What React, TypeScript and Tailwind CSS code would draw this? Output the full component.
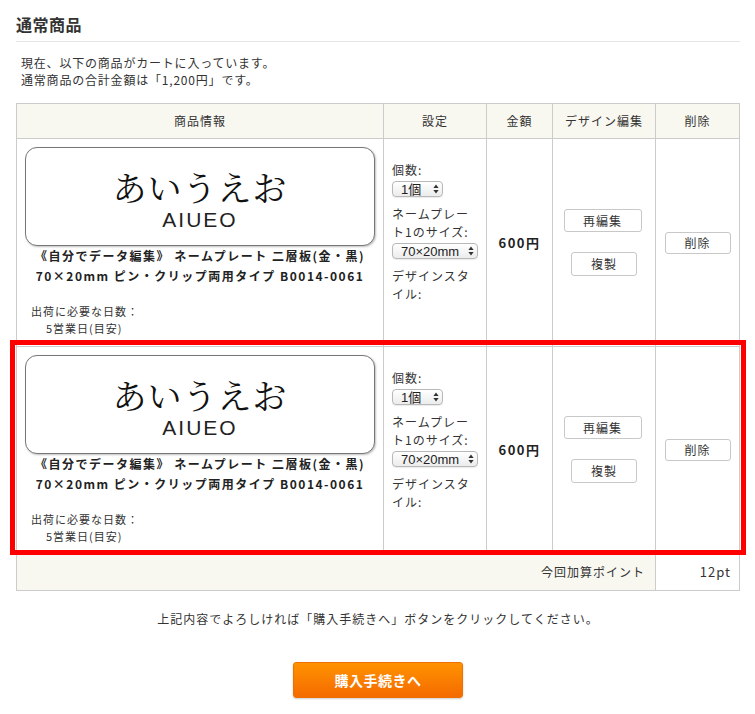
import React from "react";

const jp = "font-['Noto_Sans_CJK_JP',sans-serif]";

function Arrows() {
  return (
    <svg width="6" height="10" viewBox="0 0 6 10" className="shrink-0">
      <path d="M3 0.5 L5.6 4 L0.4 4 Z" fill="#333" />
      <path d="M3 9.5 L5.6 6 L0.4 6 Z" fill="#333" />
    </svg>
  );
}

function FakeSelect({ label, w }: { label: string; w: string }) {
  return (
    <div
      className={`${w} h-[16px] mt-[2px] flex items-center justify-between pl-[8px] pr-[3px] rounded-[4px] border border-[#b8b8b8] bg-gradient-to-b from-[#ffffff] to-[#ececec] shadow-[0_1px_1px_rgba(0,0,0,0.08)] text-[13px] leading-[14px] text-[#222] tracking-[0px] font-['Liberation_Sans','Noto_Sans_CJK_JP',sans-serif]`}
    >
      <span className="pt-[2px]">{label}</span>
      <Arrows />
    </div>
  );
}

function Btn({ children, cls }: { children: React.ReactNode; cls: string }) {
  return (
    <div
      className={`${cls} flex items-center justify-center bg-white border border-[#c8c8c8] rounded-[3px] text-[12px] text-[#333] tracking-[1px]`}
    >
      {children}
    </div>
  );
}

function ItemRow({ h, highlight }: { h: string; highlight?: boolean }) {
  return (
    <div className={`relative flex ${h} border-b border-[#cccccc]`}>
      {highlight && (
        <div className="pointer-events-none absolute -top-[7px] -left-[7px] -right-[7px] -bottom-[3px] border-[5px] border-[#ff0000] z-10" />
      )}
      {/* product info */}
      <div className="w-[367px] border-r border-[#cccccc] px-[8px] pt-[8px]">
        <div className="w-[350px] h-[99px] rounded-[12px] border border-[#777] shadow-[1px_1px_2px_rgba(0,0,0,0.25)] bg-white flex flex-col items-center pt-[22px]">
          <div className="text-[34px] leading-[34px] text-[#111] tracking-[1px] font-['Noto_Serif_CJK_JP','Noto_Sans_CJK_JP',serif] font-normal">
            あいうえお
          </div>
          <div className="mt-[5px] text-[21px] leading-[22px] text-[#222] tracking-[2px] font-['Liberation_Sans',sans-serif]">
            AIUEO
          </div>
        </div>
        <div className="mt-[0px] text-center text-[12px] leading-[20px] font-bold text-[#222] tracking-[1.5px]">
          《自分でデータ編集》 ネームプレート 二層板(金・黒)
          <br />
          70×20mm ピン・クリップ両用タイプ B0014-0061
        </div>
        <div className="mt-[17px] pl-[6px] text-[11px] leading-[17px] text-[#333] tracking-[1px]">
          出荷に必要な日数：
          <br />
          <span className="pl-[15px]">5営業日(目安)</span>
        </div>
      </div>
      {/* settings */}
      <div className="w-[103px] border-r border-[#cccccc] pl-[8px] pr-[4px] pt-[22px] text-[12px] leading-[18px] text-[#333] tracking-[1px]">
        <div>個数:</div>
        <FakeSelect label="1個" w="w-[51px]" />
        <div className="mt-[8px]">
          ネームプレー
          <br />
          ト1のサイズ:
        </div>
        <FakeSelect label="70×20mm" w="w-[86px]" />
        <div className="mt-[8px]">
          デザインスタ
          <br />
          イル:
        </div>
      </div>
      {/* price */}
      <div className="w-[66px] border-r border-[#cccccc] flex items-center justify-center text-[13px] font-bold text-[#222] tracking-[1.5px]">
        600円
      </div>
      {/* design edit */}
      <div className="w-[103px] border-r border-[#cccccc] flex flex-col items-center justify-center gap-[20px]">
        <Btn cls="w-[78px] h-[23px] -ml-[3px]">再編集</Btn>
        <Btn cls="w-[66px] h-[24px]">複製</Btn>
      </div>
      {/* delete */}
      <div className="w-[83px] flex items-center justify-center">
        <Btn cls="w-[66px] h-[22px]">削除</Btn>
      </div>
    </div>
  );
}

export default function App() {
  return (
    <div className={`w-[755px] min-h-[714px] bg-white ${jp} text-[#333]`}>
      <div className="pl-[16px] w-[740px]">
        <div className="pt-[12px] pb-[5px] border-b border-[#e6e6e6] text-[16px] leading-[24px] font-bold tracking-[0.5px] text-[#333]">
          通常商品
        </div>
        <div className="mt-[12px] pl-[5px] text-[12px] leading-[17px] tracking-[0.8px] text-[#333]">
          現在、以下の商品がカートに入っています。
          <br />
          通常商品の合計金額は「1,200円」です。
        </div>

        <div className="mt-[15px] w-[724px] border border-[#cccccc] text-[12px] tracking-[1px] text-[#333]">
          {/* header */}
          <div className="flex h-[35px] border-b border-[#cccccc] bg-[#f8f7f0]">
            <div className="w-[367px] border-r border-[#cccccc] flex items-center justify-center">商品情報</div>
            <div className="w-[103px] border-r border-[#cccccc] flex items-center justify-center">設定</div>
            <div className="w-[66px] border-r border-[#cccccc] flex items-center justify-center">金額</div>
            <div className="w-[103px] border-r border-[#cccccc] flex items-center justify-center">デザイン編集</div>
            <div className="w-[83px] flex items-center justify-center">削除</div>
          </div>
          <ItemRow h="h-[208px]" />
          <ItemRow h="h-[206px]" highlight />
          {/* footer */}
          <div className="flex h-[37px]">
            <div className="w-[639px] border-r border-[#cccccc] bg-[#f8f7f0] flex items-center justify-end pr-[10px]">
              今回加算ポイント
            </div>
            <div className="w-[83px] flex items-center justify-end pr-[8px] text-[13px]">
              12pt
            </div>
          </div>
        </div>

        <div className="mt-[19px] text-center text-[12px] leading-[18px] tracking-[1px] text-[#333]">
          上記内容でよろしければ「購入手続きへ」ボタンをクリックしてください。
        </div>

        <div className="mt-[34px] flex justify-center">
          <div className="w-[170px] h-[36px] flex items-center justify-center rounded-[3px] border border-[#ee7000] bg-gradient-to-b from-[#ff9200] to-[#f46a00] shadow-[0_1px_2px_rgba(0,0,0,0.2)] text-white text-[14px] font-bold tracking-[0.5px]">
            購入手続きへ
          </div>
        </div>
      </div>
    </div>
  );
}
